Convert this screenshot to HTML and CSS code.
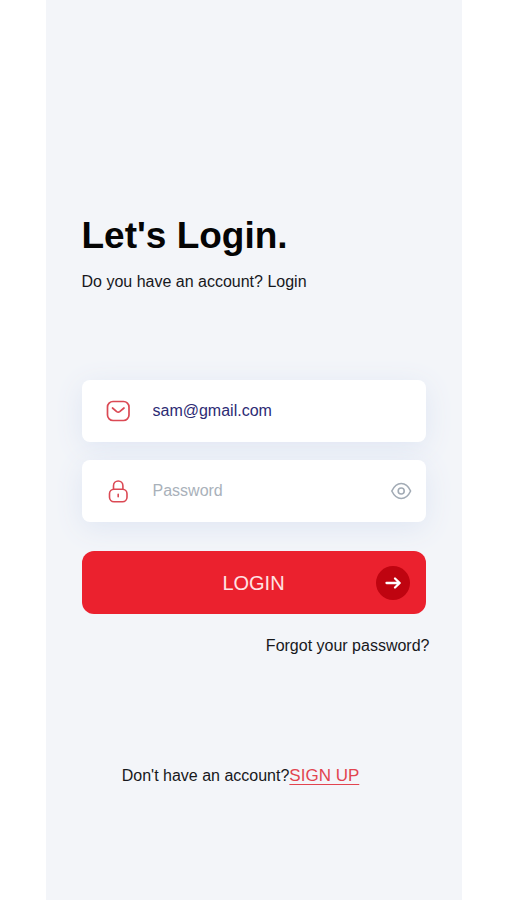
FILE: index.html
```html
<!DOCTYPE html>
<html lang="en">
<head>
<meta charset="utf-8">
<meta name="viewport" content="width=device-width, initial-scale=1">
<title>Login</title>
<link rel="stylesheet" href="styles.css">
</head>
<body>
<main class="screen">
  <h1 class="title">Let's Login.</h1>
  <p class="subtitle">Do you have an account? Login</p>
  <form class="form">
    <div class="field">
      <label class="field-icon" for="email" aria-label="Email">
        <svg width="24" height="24" viewBox="0 0 24 24" fill="none" stroke="currentColor" stroke-width="1.7" stroke-linecap="round" stroke-linejoin="round"><rect x="1.500" y="2.500" width="21.500" height="19" rx="5.500"/><path d="M6.500 9l4.200 3.600q1.500 1.200 3 0L18 9"/></svg>
      </label>
      <input class="input" id="email" type="email" value="sam@gmail.com">
    </div>
    <div class="field">
      <label class="field-icon" for="password" aria-label="Password">
        <svg width="24" height="24" viewBox="0 0 24 24" fill="none" stroke="currentColor" stroke-width="1.600" stroke-linecap="round" stroke-linejoin="round"><rect x="3.500" y="10.300" width="17.500" height="12.500" rx="4.500"/><path d="M7.500 10.300V6.700a4.700 4.700 0 0 1 9.400 0v3.600M12.200 15.300v2.500"/></svg>
      </label>
      <input class="input" id="password" type="password" placeholder="Password">
      <button class="reveal" type="button" aria-label="Show password">
        <svg width="22" height="22" viewBox="0 0 22 22" fill="none" stroke="currentColor" stroke-width="1.600" stroke-linejoin="round"><path d="M1.800 11C3.500 7.500 7 3.500 11.200 3.500S19 7.500 20.600 11C19 14.500 15.400 18.500 11.200 18.500S3.500 14.500 1.800 11Z"/><circle cx="11.200" cy="11" r="3"/></svg>
      </button>
    </div>
    <button class="login" type="submit">
      <span class="login-text">LOGIN</span>
      <span class="login-arrow"><svg width="18" height="18" viewBox="0 0 18 18" fill="none" stroke="currentColor" stroke-width="2.300" stroke-linecap="round" stroke-linejoin="round"><path d="M2.500 9h13M11 4.500L15.700 9L11 13.500"/></svg></span>
    </button>
  </form>
  <a class="forgot" href="#">Forgot your password?</a>
  <p class="signup">Don't have an account?<a class="signup-link" href="#">SIGN UP</a></p>
</main>
</body>
</html>
```
FILE: styles.css
```css
* {
  box-sizing: border-box;
}

body {
  margin: 0;
  background: #fff;
  color: #17181c;
  font: 16px/20px "Liberation Sans", Arial, sans-serif;
}

.screen {
  display: flex;
  flex-direction: column;
  max-width: 416px;
  min-height: 100vh;
  margin: 0 auto;
  padding: 212px 36px 40px;
  background: #f3f5f9;
}

.title {
  margin: 0;
  color: #050505;
  font-size: 37px;
  line-height: 48px;
}

.subtitle {
  margin: 12px 0 0;
}

.form {
  display: flex;
  flex-direction: column;
  gap: 18px;
  margin-top: 88px;
}

.field {
  display: flex;
  align-items: center;
  height: 62px;
  padding: 0 14px 0 24px;
  border-radius: 8px;
  background: #fff;
  box-shadow: 0 6px 28px #dfe6f3;
}

.field-icon {
  display: flex;
  color: #db4954;
}

.input {
  flex: 1;
  min-width: 0;
  margin-left: 23px;
  padding: 0;
  border: 0;
  outline: 0;
  background: none;
  color: #2d2b74;
  font: inherit;
}

.input::placeholder {
  color: #a9b1ba;
}

.reveal {
  display: flex;
  padding: 0;
  border: 0;
  background: none;
  color: #a2abb5;
}

.login {
  display: grid;
  grid-template-columns: 34px 1fr 34px;
  align-items: center;
  height: 63px;
  margin-top: 11px;
  padding: 0 16px;
  border: 0;
  border-radius: 12px;
  background: #eb212e;
  color: #fff;
  font: inherit;
  font-size: 20px;
}

.login-text {
  grid-column: 2;
  color: #ffe3e4;
}

.login-arrow {
  display: grid;
  place-items: center;
  height: 34px;
  border-radius: 50%;
  background: #bf0410;
}

.forgot {
  align-self: flex-end;
  margin: 22px -4px 0 0;
  color: inherit;
  text-decoration: none;
}

.signup {
  margin: 110px 0 0;
  padding-right: 26px;
  text-align: center;
}

.signup-link {
  color: #e2444f;
  font-size: 17px;
  text-underline-offset: 3px;
}
```
